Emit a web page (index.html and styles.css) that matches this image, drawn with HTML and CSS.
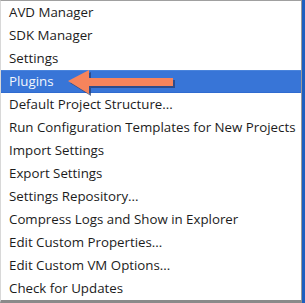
FILE: index.html
```html
<!DOCTYPE html>
<html>
<head>
<meta charset="utf-8">
<link rel="stylesheet" href="styles.css">
</head>
<body>
<div class="frame">
  <ul class="menu">
    <li class="item">AVD Manager</li>
    <li class="item">SDK Manager</li>
    <li class="item">Settings</li>
    <li class="item active">Plugins</li>
    <li class="item">Default Project Structure...</li>
    <li class="item">Run Configuration Templates for New Projects</li>
    <li class="item">Import Settings</li>
    <li class="item">Export Settings</li>
    <li class="item">Settings Repository...</li>
    <li class="item">Compress Logs and Show in Explorer</li>
    <li class="item">Edit Custom Properties...</li>
    <li class="item">Edit Custom VM Options...</li>
    <li class="item">Check for Updates</li>
  </ul>
  <svg class="arrow" width="120" height="30" viewBox="0 0 120 30">
    <g transform="translate(2,2)" fill="#2a3f73" opacity="0.75">
      <polygon points="0,11 21,0 21,8 105,8 105,16 21,16 21,24"/>
    </g>
    <polygon fill="#f6845c" points="0,11 21,0 21,8 105,8 105,16 21,16 21,24"/>
  </svg>
</div>
</body>
</html>
```
FILE: styles.css
```css
html, body {
  margin: 0;
  padding: 0;
  background: #ffffff;
}
.frame {
  position: relative;
  width: 300px;
  height: 299px;
  border-top: 1px solid #a0a0a0;
  border-left: 1px solid #d8d8d8;
  border-right: 1px solid #9a9a9a;
  border-bottom: 3px solid #8a8a8a;
  box-shadow: 3px 0 0 #1f5fbf;
  background: #ffffff;
}
.menu {
  list-style: none;
  margin: 0;
  padding: 0;
  display: flex;
  flex-direction: column;
}
.item {
  height: 23px;
  line-height: 23px;
  padding-left: 8px;
  font-family: "Open Sans", "Noto Sans", sans-serif;
  font-size: 13.3px;
  color: #1c1c1c;
  white-space: nowrap;
  box-sizing: border-box;
}
.item.active {
  background: #3875d7;
  color: #f2f6fc;
  border-top: 1px solid #4a84dc;
  border-bottom: 1px solid #2f6bd0;
  line-height: 21px;
}
.arrow {
  position: absolute;
  left: 67px;
  top: 69px;
}
```
